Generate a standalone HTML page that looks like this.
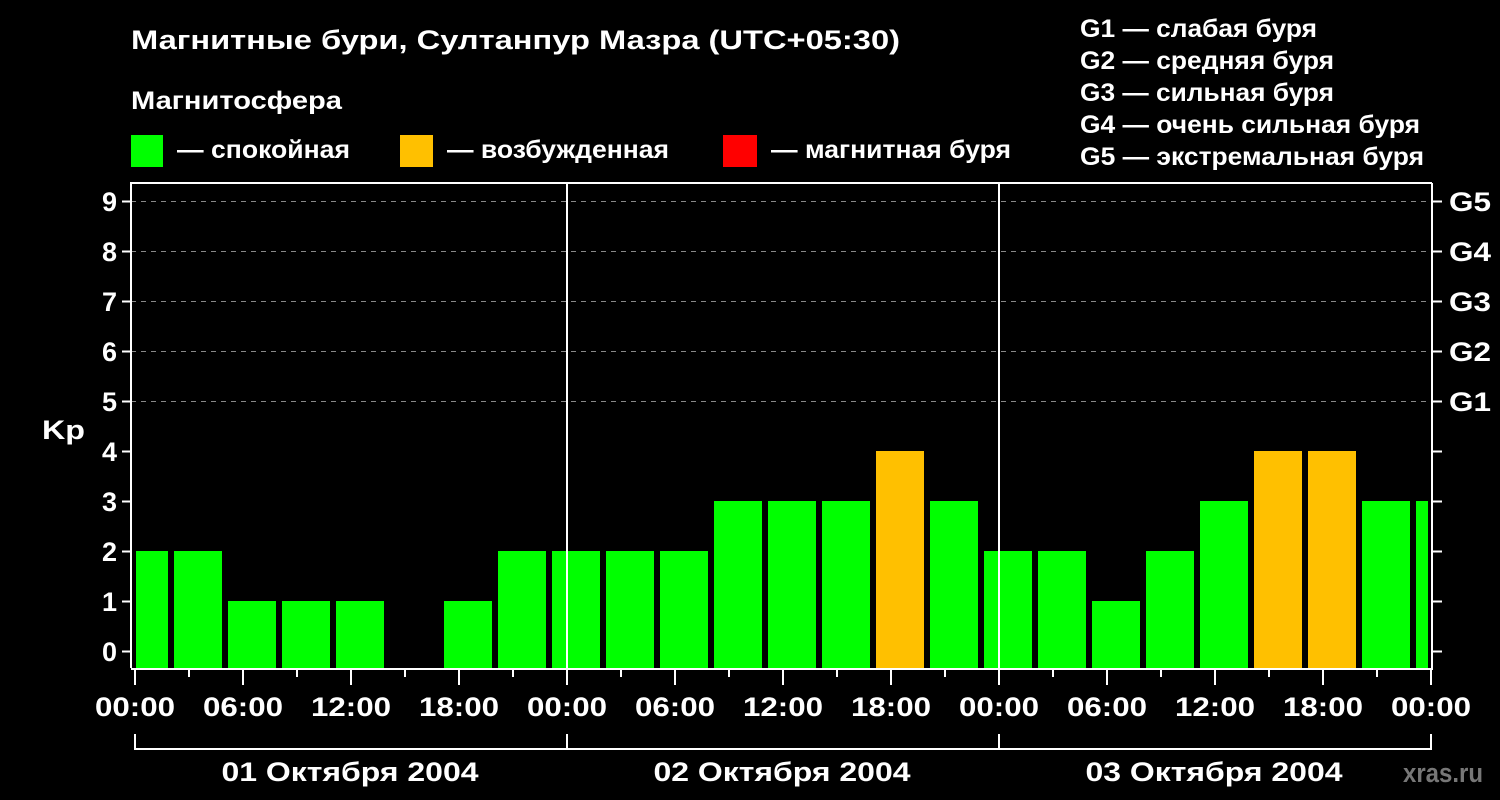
<!DOCTYPE html>
<html><head><meta charset="utf-8"><style>
html,body{margin:0;padding:0;background:#000;}
svg{display:block}
text{font-family:"Liberation Sans",sans-serif;font-weight:bold;fill:#fff}
</style></head><body>
<svg width="1500" height="800" viewBox="0 0 1500 800" xmlns="http://www.w3.org/2000/svg">
<rect width="1500" height="800" fill="#000"/>
<text x="131" y="49" font-size="27" textLength="769" lengthAdjust="spacingAndGlyphs">Магнитные бури, Султанпур Мазра (UTC+05:30)</text>
<text x="131" y="109" font-size="25" textLength="211" lengthAdjust="spacingAndGlyphs">Магнитосфера</text>
<rect x="131" y="135" width="32" height="32" fill="#00ff00"/>
<text x="177" y="158" font-size="25" textLength="173" lengthAdjust="spacingAndGlyphs">— спокойная</text>
<rect x="400" y="135" width="33" height="32" fill="#ffc000"/>
<text x="447" y="158" font-size="25" textLength="222" lengthAdjust="spacingAndGlyphs">— возбужденная</text>
<rect x="723" y="135" width="34" height="32" fill="#ff0000"/>
<text x="771" y="158" font-size="25" textLength="240" lengthAdjust="spacingAndGlyphs">— магнитная буря</text>
<g font-size="25">
<text x="1080" y="37" textLength="237" lengthAdjust="spacingAndGlyphs">G1 — слабая буря</text>
<text x="1080" y="69" textLength="254" lengthAdjust="spacingAndGlyphs">G2 — средняя буря</text>
<text x="1080" y="101" textLength="254" lengthAdjust="spacingAndGlyphs">G3 — сильная буря</text>
<text x="1080" y="133" textLength="340" lengthAdjust="spacingAndGlyphs">G4 — очень сильная буря</text>
<text x="1080" y="165" textLength="344" lengthAdjust="spacingAndGlyphs">G5 — экстремальная буря</text>
</g>
<g stroke="#888" stroke-width="1" stroke-dasharray="5,5">
<line x1="131" y1="201.5" x2="1432" y2="201.5"/>
<line x1="131" y1="251.5" x2="1432" y2="251.5"/>
<line x1="131" y1="301.5" x2="1432" y2="301.5"/>
<line x1="131" y1="351.5" x2="1432" y2="351.5"/>
<line x1="131" y1="401.5" x2="1432" y2="401.5"/>
</g>
<g id="bars">
<rect x="136" y="551" width="32" height="117" fill="#00ff00"/>
<rect x="174" y="551" width="48" height="117" fill="#00ff00"/>
<rect x="228" y="601" width="48" height="67" fill="#00ff00"/>
<rect x="282" y="601" width="48" height="67" fill="#00ff00"/>
<rect x="336" y="601" width="48" height="67" fill="#00ff00"/>
<rect x="444" y="601" width="48" height="67" fill="#00ff00"/>
<rect x="498" y="551" width="48" height="117" fill="#00ff00"/>
<rect x="552" y="551" width="48" height="117" fill="#00ff00"/>
<rect x="606" y="551" width="48" height="117" fill="#00ff00"/>
<rect x="660" y="551" width="48" height="117" fill="#00ff00"/>
<rect x="714" y="501" width="48" height="167" fill="#00ff00"/>
<rect x="768" y="501" width="48" height="167" fill="#00ff00"/>
<rect x="822" y="501" width="48" height="167" fill="#00ff00"/>
<rect x="876" y="451" width="48" height="217" fill="#ffc000"/>
<rect x="930" y="501" width="48" height="167" fill="#00ff00"/>
<rect x="984" y="551" width="48" height="117" fill="#00ff00"/>
<rect x="1038" y="551" width="48" height="117" fill="#00ff00"/>
<rect x="1092" y="601" width="48" height="67" fill="#00ff00"/>
<rect x="1146" y="551" width="48" height="117" fill="#00ff00"/>
<rect x="1200" y="501" width="48" height="167" fill="#00ff00"/>
<rect x="1254" y="451" width="48" height="217" fill="#ffc000"/>
<rect x="1308" y="451" width="48" height="217" fill="#ffc000"/>
<rect x="1362" y="501" width="48" height="167" fill="#00ff00"/>
<rect x="1416" y="501" width="12" height="167" fill="#00ff00"/>
</g>
<g stroke="#fff" stroke-width="2" fill="none">
<path d="M131,668 V183 H1432"/>
<path d="M131,669 H1433 M1432,669 V183"/>
<line x1="567" y1="183" x2="567" y2="668"/>
<line x1="999" y1="183" x2="999" y2="668"/>
<path d="M122,201.5H131 M122,251.5H131 M122,301.5H131 M122,351.5H131 M122,401.5H131 M122,451.5H131 M122,501.5H131 M122,551.5H131 M122,601.5H131 M122,651.5H131"/>
<path d="M1432,201.5H1442 M1432,251.5H1442 M1432,301.5H1442 M1432,351.5H1442 M1432,401.5H1442 M1432,451.5H1442 M1432,501.5H1442 M1432,551.5H1442 M1432,601.5H1442 M1432,651.5H1442"/>
<path d="M135,669V685 M243,669V685 M351,669V685 M459,669V685 M567,669V685 M675,669V685 M783,669V685 M891,669V685 M999,669V685 M1107,669V685 M1215,669V685 M1323,669V685 M1431,669V685"/>
<path d="M189,669V677 M297,669V677 M405,669V677 M513,669V677 M621,669V677 M729,669V677 M837,669V677 M945,669V677 M1053,669V677 M1161,669V677 M1269,669V677 M1377,669V677"/>
<path d="M135,734V749H1431V734 M567,734V749 M999,734V749"/>
</g>
<g font-size="27" text-anchor="end">
<text x="117" y="211">9</text><text x="117" y="261">8</text><text x="117" y="311">7</text>
<text x="117" y="361">6</text><text x="117" y="411">5</text><text x="117" y="461">4</text>
<text x="117" y="511">3</text><text x="117" y="561">2</text><text x="117" y="611">1</text>
<text x="117" y="661">0</text>
</g>
<text x="42" y="439" font-size="27" textLength="43" lengthAdjust="spacingAndGlyphs">Kp</text>
<g font-size="27">
<text x="1449" y="211" textLength="42" lengthAdjust="spacingAndGlyphs">G5</text><text x="1449" y="261" textLength="42" lengthAdjust="spacingAndGlyphs">G4</text><text x="1449" y="311" textLength="42" lengthAdjust="spacingAndGlyphs">G3</text>
<text x="1449" y="361" textLength="42" lengthAdjust="spacingAndGlyphs">G2</text><text x="1449" y="411" textLength="42" lengthAdjust="spacingAndGlyphs">G1</text>
</g>
<g font-size="27" text-anchor="middle">
<text x="135" y="716" textLength="80" lengthAdjust="spacingAndGlyphs">00:00</text><text x="243" y="716" textLength="80" lengthAdjust="spacingAndGlyphs">06:00</text><text x="351" y="716" textLength="80" lengthAdjust="spacingAndGlyphs">12:00</text><text x="459" y="716" textLength="80" lengthAdjust="spacingAndGlyphs">18:00</text>
<text x="567" y="716" textLength="80" lengthAdjust="spacingAndGlyphs">00:00</text><text x="675" y="716" textLength="80" lengthAdjust="spacingAndGlyphs">06:00</text><text x="783" y="716" textLength="80" lengthAdjust="spacingAndGlyphs">12:00</text><text x="891" y="716" textLength="80" lengthAdjust="spacingAndGlyphs">18:00</text>
<text x="999" y="716" textLength="80" lengthAdjust="spacingAndGlyphs">00:00</text><text x="1107" y="716" textLength="80" lengthAdjust="spacingAndGlyphs">06:00</text><text x="1215" y="716" textLength="80" lengthAdjust="spacingAndGlyphs">12:00</text><text x="1323" y="716" textLength="80" lengthAdjust="spacingAndGlyphs">18:00</text>
<text x="1431" y="716" textLength="80" lengthAdjust="spacingAndGlyphs">00:00</text>
<text x="350" y="781" textLength="257" lengthAdjust="spacingAndGlyphs">01 Октября 2004</text>
<text x="782" y="781" textLength="257" lengthAdjust="spacingAndGlyphs">02 Октября 2004</text>
<text x="1214" y="781" textLength="257" lengthAdjust="spacingAndGlyphs">03 Октября 2004</text>
</g>
<text x="1403" y="782" font-size="27" textLength="80" lengthAdjust="spacingAndGlyphs" style="fill:#777">xras.ru</text>
</svg>
</body></html>
